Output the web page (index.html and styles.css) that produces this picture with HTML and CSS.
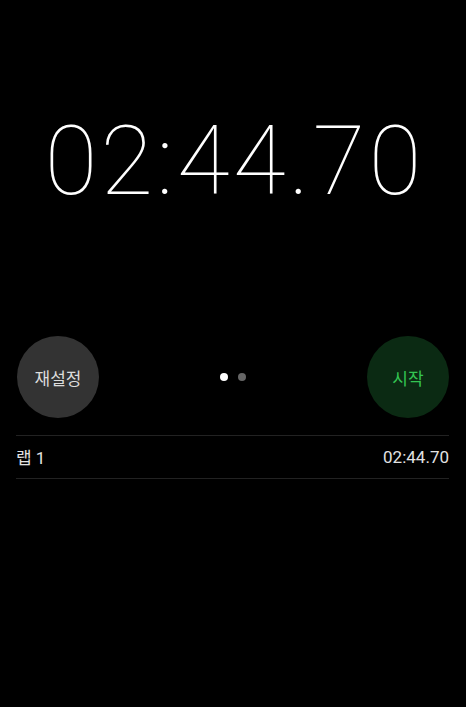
FILE: index.html
```html
<!DOCTYPE html>
<html lang="ko">
<head>
<meta charset="utf-8">
<link rel="stylesheet" href="styles.css">
</head>
<body>
<div class="app">
  <div class="display"><span class="time">02:44.70</span></div>
  <div class="controls">
    <button class="btn btn-reset">재설정</button>
    <div class="dots"><span class="dot on"></span><span class="dot"></span></div>
    <button class="btn btn-start">시작</button>
  </div>
  <ul class="laps">
    <li class="lap"><span>랩 1</span><span>02:44.70</span></li>
  </ul>
</div>
</body>
</html>
```
FILE: styles.css
```css
html, body {
  margin: 0;
  padding: 0;
  background: #000;
  height: 100%;
}
.app {
  font-family: Roboto, "Noto Sans CJK KR", sans-serif;
  color: #fff;
  display: flex;
  flex-direction: column;
}
.display {
  height: 336px;
  display: flex;
  justify-content: center;
  align-items: flex-start;
}
.time {
  font-weight: 100;
  font-size: 96px;
  line-height: 1;
  margin-top: 113px;
  font-variant-numeric: tabular-nums;
  letter-spacing: 3.4px;
  padding-left: 3.4px;
}
.controls {
  display: flex;
  justify-content: space-between;
  align-items: center;
  padding: 0 17px;
  height: 82px;
}
.btn {
  width: 82px;
  height: 82px;
  border-radius: 50%;
  border: none;
  font-family: "Noto Sans CJK KR", sans-serif;
  font-size: 17px;
  padding: 0;
}
.btn-reset {
  background: #333333;
  color: #dcdcdc;
}
.btn-start {
  background: #0b2a13;
  color: #33c452;
}
.dots {
  display: flex;
  gap: 10px;
  align-items: center;
}
.dot {
  width: 8px;
  height: 8px;
  border-radius: 50%;
  background: #666;
}
.dot.on {
  background: #fff;
}
.laps {
  list-style: none;
  margin: 17px 17px 0 16px;
  padding: 0;
  border-top: 1px solid #222;
}
.lap {
  display: flex;
  justify-content: space-between;
  align-items: center;
  height: 42px;
  border-bottom: 1px solid #222;
  font-size: 17px;
  color: #e2e2e2;
}
.lap span:first-child {
  margin-top: -1px;
}
```
